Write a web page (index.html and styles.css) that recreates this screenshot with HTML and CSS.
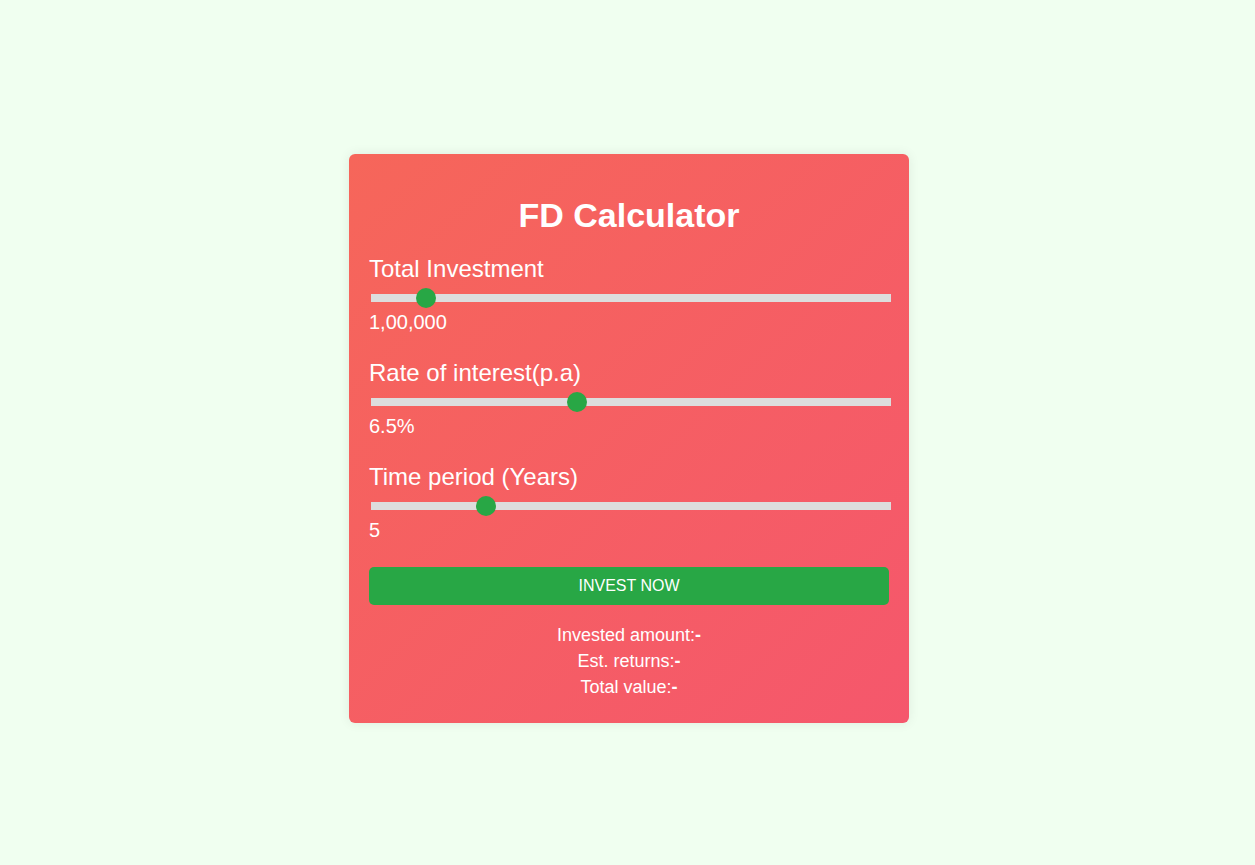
FILE: index.html
```html
<!DOCTYPE html>
<html lang="en">
<head>
<meta charset="UTF-8">
<title>FD Calculator</title>
<link rel="stylesheet" href="styles.css">
</head>
<body>
<main class="page">
  <section class="card">
    <h1 class="title">FD Calculator</h1>
    <div class="field">
      <label class="field-label" for="amt">Total Investment</label>
      <input class="slider" type="range" id="amt" min="10000" max="1000000" step="10000" value="100000">
      <span class="field-value">1,00,000</span>
    </div>
    <div class="field">
      <label class="field-label" for="rate">Rate of interest(p.a)</label>
      <input class="slider" type="range" id="rate" min="1" max="15" step="0.1" value="6.5">
      <span class="field-value">6.5%</span>
    </div>
    <div class="field">
      <label class="field-label" for="time">Time period (Years)</label>
      <input class="slider" type="range" id="time" min="1" max="20" step="1" value="5">
      <span class="field-value">5</span>
    </div>
    <button class="invest-btn" type="button">INVEST NOW</button>
    <div class="results">
      <p class="result-line">Invested amount:<b>-</b></p>
      <p class="result-line">Est. returns:<b>-</b></p>
      <p class="result-line">Total value:<b>-</b></p>
    </div>
  </section>
</main>
</body>
</html>
```

FILE: styles.css
```css
* { box-sizing: border-box; }

html, body {
  margin: 0;
  padding: 0;
}

body {
  background: #f0fff0;
  font-family: "Liberation Sans", Arial, sans-serif;
  color: #ffffff;
}

.page {
  min-height: 865px;
  display: flex;
  justify-content: center;
  padding-top: 154px;
  padding-left: 3px;
}

.card {
  width: 560px;
  height: 569px;
  padding: 20px;
  border-radius: 6px;
  background: linear-gradient(135deg, #f6665a 0%, #f5576c 100%);
  box-shadow: 0 0 12px rgba(0, 0, 0, 0.08);
  display: flex;
  flex-direction: column;
}

.title {
  margin: 22px 0 20px;
  font-size: 34px;
  line-height: 39px;
  font-weight: bold;
  text-align: center;
}

.field {
  display: flex;
  flex-direction: column;
  align-items: flex-start;
  margin-bottom: 25px;
}

.field-label {
  font-size: 24px;
  line-height: 28px;
}

.slider {
  -webkit-appearance: none;
  appearance: none;
  width: 100%;
  height: 8px;
  margin: 11px 0 0 2px;
  background: #dddddd;
  outline: none;
  border: none;
  padding: 0;
}

.slider::-webkit-slider-thumb {
  -webkit-appearance: none;
  appearance: none;
  width: 20px;
  height: 20px;
  border-radius: 50%;
  background: #28a745;
  cursor: pointer;
}

.field-value {
  margin-top: 9px;
  font-size: 20px;
  line-height: 23px;
}

.invest-btn {
  width: 100%;
  height: 38px;
  border: none;
  border-radius: 5px;
  background: #28a745;
  color: #ffffff;
  font-family: "Liberation Sans", Arial, sans-serif;
  font-size: 16px;
  cursor: pointer;
}

.results {
  margin-top: 17px;
  text-align: center;
}

.result-line {
  margin: 0;
  font-size: 18px;
  line-height: 26px;
}
```
